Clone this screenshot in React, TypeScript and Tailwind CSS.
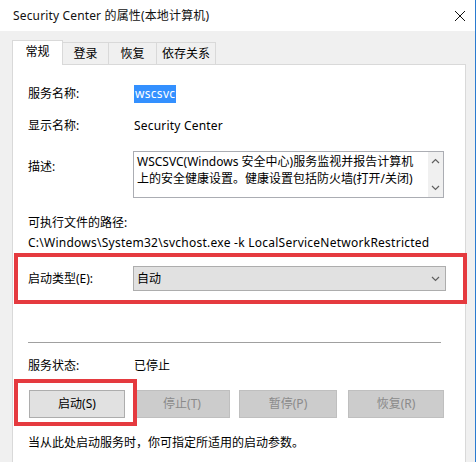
const font = { fontFamily: '"Noto Sans", "Noto Sans CJK SC", sans-serif' };

function Chevron({ up = false }: { up?: boolean }) {
  return (
    <svg width="9" height="6" viewBox="0 0 9 6" className={up ? "rotate-180" : ""}>
      <path d="M1 1 L4.5 4.5 L8 1" fill="none" stroke="#606060" strokeWidth="1.2" />
    </svg>
  );
}

function Button({ label, disabled = false, className = "" }: { label: string; disabled?: boolean; className?: string }) {
  return (
    <div
      className={
        "h-[28px] flex items-center justify-center border text-[12px] " +
        (disabled ? "bg-[#cccccc] border-[#bfbfbf] text-[#8a8a8a] " : "bg-[#e1e1e1] border-[#adadad] text-black ") +
        className
      }
    >
      {label}
    </div>
  );
}

export default function App() {
  const tabs = [
    { label: "登录", w: "w-[46px]" },
    { label: "恢复", w: "w-[48px]" },
    { label: "依存关系", w: "w-[59px]" },
  ];

  return (
    <div style={font} className="relative w-[476px] h-[462px] overflow-hidden bg-[#f0f0f0] border-r border-[#2a7bd0] text-[12px] text-black">
      {/* Title bar */}
      <div className="h-[31px] bg-white flex items-center justify-between pl-[13px] pr-[9px]">
        <span className="text-[12px] text-[#111] tracking-[0.15px]">Security Center 的属性(本地计算机)</span>
        <svg width="12" height="12" viewBox="0 0 12 12">
          <path d="M1 1 L11 11 M11 1 L1 11" stroke="#111" strokeWidth="1" />
        </svg>
      </div>

      {/* Tabs */}
      <div className="h-[33px] flex items-end pl-[12px]">
        <div className="relative z-10 -mb-px w-[51px] h-[25px] bg-white border border-b-0 border-[#d9d9d9] flex items-center justify-center pb-[2px]">
          常规
        </div>
        {tabs.map((t) => (
          <div
            key={t.label}
            className={t.w + " h-[22px] border border-l-0 border-b-0 border-[#d9d9d9] flex items-center justify-center"}
          >
            {t.label}
          </div>
        ))}
      </div>

      {/* Panel */}
      <div className="ml-[12px] mr-[9px] h-[420px] bg-white border border-[#d9d9d9] pl-[15px]">
        <div className="mt-[20px] h-[18px] flex items-center">
          <span className="w-[106px]">服务名称:</span>
          <span className="bg-[#3390ff] text-white px-[1px] h-[18px] leading-[18px] tracking-[0.3px]">wscsvc</span>
        </div>
        <div className="mt-[14px] h-[18px] flex items-center">
          <span className="w-[106px]">显示名称:</span>
          <span className="tracking-[0.2px]">Security Center</span>
        </div>
        <div className="mt-[16px] flex items-start">
          <span className="w-[105px] mt-[7px] h-[18px] leading-[18px]">描述:</span>
          <div className="w-[311px] h-[47px] border border-[#abadb3] flex">
            <div className="flex-1 pl-[3px] pt-[1px] leading-[17px] whitespace-nowrap">
              <div>WSCSVC(Windows 安全中心)服务监视并报告计算机</div>
              <div>上的安全健康设置。健康设置包括防火墙(打开/关闭)</div>
            </div>
            <div className="w-[15px] bg-[#f0f0f0] flex flex-col items-center justify-between py-[6px]">
              <Chevron up />
              <Chevron />
            </div>
          </div>
        </div>
        <div className="mt-[16px] h-[18px] leading-[18px]">可执行文件的路径:</div>
        <div className="mt-[2px] h-[18px] leading-[18px] whitespace-nowrap tracking-[0.25px]">
          C:\Windows\System32\svchost.exe -k LocalServiceNetworkRestricted
        </div>
        <div className="mt-[14px] flex items-center">
          <span className="w-[105px]">启动类型(E):</span>
          <div className="w-[313px] h-[25px] bg-[#e1e1e1] border border-[#adadad] flex items-center justify-between pl-[3px] pr-[5px]">
            <span>自动</span>
            <Chevron />
          </div>
        </div>
        <div className="mt-[51px] w-[413px] h-px bg-[#a0a0a0]" />
        <div className="mt-[14px] h-[18px] flex items-center">
          <span className="w-[106px]">服务状态:</span>
          <span>已停止</span>
        </div>
        <div className="mt-[15px] flex">
          <Button label="启动(S)" className="ml-[1px] w-[96px]" />
          <Button label="停止(T)" disabled className="ml-[9px] w-[96px]" />
          <Button label="暂停(P)" disabled className="ml-[9px] w-[98px]" />
          <Button label="恢复(R)" disabled className="ml-[11px] w-[96px]" />
        </div>
        <div className="mt-[16px] h-[18px] leading-[18px]">当从此处启动服务时，你可指定所适用的启动参数。</div>
      </div>

      {/* Red annotation boxes */}
      <div className="absolute left-[14px] top-[253px] w-[453px] h-[51px] border-[4px] border-[#e53a3f] pointer-events-none" />
      <div className="absolute left-[14px] top-[379px] w-[123px] h-[47px] border-[4px] border-[#e53a3f] pointer-events-none" />
    </div>
  );
}
